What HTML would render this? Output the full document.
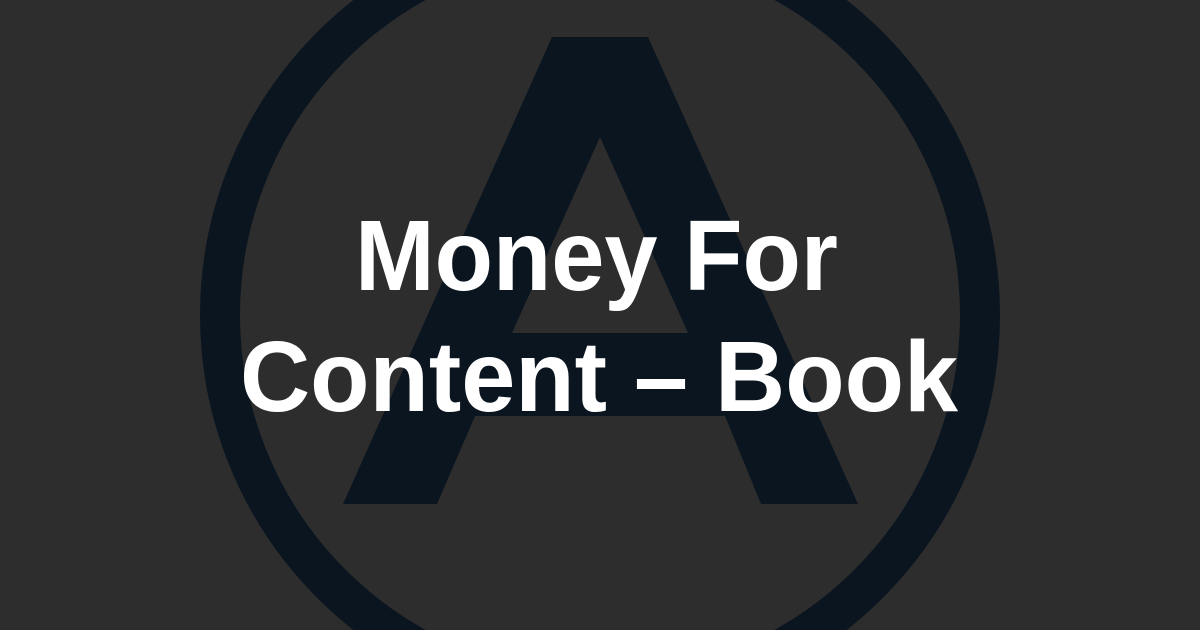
<!DOCTYPE html>
<html><head><meta charset="utf-8"><style>
html,body{margin:0;padding:0;width:1200px;height:630px;overflow:hidden;background:#2d2d2d}
svg{display:block}
</style></head><body>
<svg width="1200" height="630" viewBox="0 0 1200 630" xmlns="http://www.w3.org/2000/svg">
<rect width="1200" height="630" fill="#2d2d2d"/>
<circle cx="600" cy="315" r="380" fill="none" stroke="#0a1520" stroke-width="40"/>
<path fill="#0a1520" fill-rule="evenodd" d="M552 37 L648 37 L858 504 L761 504 L725 416 L475 416 L437 504 L343 504 Z M600 137 L688 333 L512 333 Z"/>
<g fill="#ffffff" font-family="Liberation Sans, Arial, sans-serif" font-weight="bold" font-size="100">
<text x="355" y="290" textLength="483" lengthAdjust="spacingAndGlyphs">Money For</text>
<text x="240" y="411" textLength="718" lengthAdjust="spacingAndGlyphs">Content – Book</text>
</g>
</svg>
</body></html>
